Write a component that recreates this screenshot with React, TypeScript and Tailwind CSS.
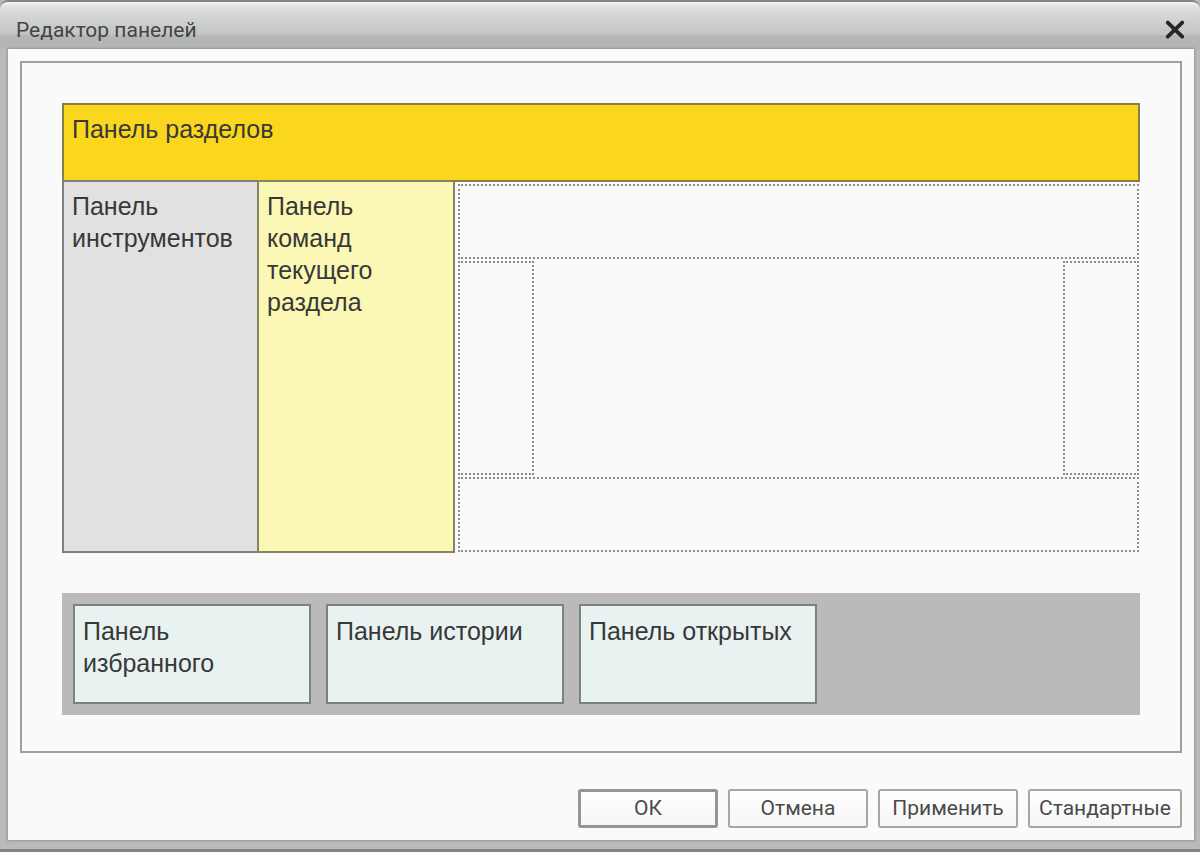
import React from "react";

const storedPanels = ["Панель избранного", "Панель истории", "Панель открытых"];

const slot = "border-2 border-dotted border-[#8c8c8c]";

type ActionButtonProps = {
  label: string;
  primary?: boolean;
  wide?: boolean;
};

function ActionButton({ label, primary = false, wide = false }: ActionButtonProps) {
  const frame = primary ? "border-[3px] border-[#959595]" : "border-2 border-[#a6a6a6]";
  const width = wide ? "w-[154px]" : "w-[140px]";
  return (
    <button
      type="button"
      className={`flex h-[39px] items-center justify-center rounded-[3px] bg-gradient-to-b from-white to-[#f6f6f6] text-[#4a4a4a] ${frame} ${width}`}
    >
      {label}
    </button>
  );
}

export default function App() {
  return (
    <div
      role="dialog"
      aria-labelledby="editor-title"
      className="flex min-h-screen flex-col border-b-[3px] border-[#858585] bg-[#b9baba] font-['Liberation_Sans',sans-serif]"
    >
      <header className="flex h-[49px] items-center justify-between rounded-t-lg border-t-2 border-[#858585] bg-[linear-gradient(to_bottom,#f4f4f4_0px,#e0e0e0_5px,#d2d3d3_16px,#c3c4c5_32px,#b4b5b5_34px,#b4b5b5_100%)] pt-2 pr-[15px] pl-4">
        <h1 id="editor-title" className="font-['Roboto','Liberation_Sans',sans-serif] text-[21px] leading-7 text-[#444]">
          Редактор панелей
        </h1>
        <button type="button" aria-label="Закрыть" className="flex size-5 items-center justify-center text-[#262626]">
          <svg viewBox="0 0 20 20" className="size-5" fill="none" stroke="currentColor" strokeWidth="3.8" strokeLinecap="round">
            <path d="M2.8 2.6 17.2 16.6M17.2 2.6 2.8 16.6" />
          </svg>
        </button>
      </header>

      <main className="mr-[6px] mb-[9px] ml-2 flex flex-1 flex-col bg-[#fafafa] p-3 shadow-[0_0_2px_1px_#969696]">
        <section className="flex flex-1 flex-col border-2 border-[#a0a0a0] px-10 pt-10 pb-9 text-[25px] leading-8 text-[#383838]">
          <div className="h-[79px] border-2 border-[#85804a] bg-[#fad71c] px-2 py-2">Панель разделов</div>
          <div className="-mt-[2px] flex min-h-[373px] flex-1">
            <div className="w-[197px] border-2 border-[#808080] bg-[#e1e1e1] px-2 py-2">Панель инструментов</div>
            <div className="-ml-[2px] w-[198px] border-2 border-[#858565] bg-[#faf8b4] py-2 pr-10 pl-2">
              Панель команд текущего раздела
            </div>
            <div className="mt-1 mr-px mb-px ml-[3px] flex flex-1 flex-col gap-[2px]">
              <div className={`h-[75px] ${slot}`} />
              <div className="flex flex-1 justify-between">
                <div className={`w-[76px] ${slot}`} />
                <div className={`w-[76px] ${slot}`} />
              </div>
              <div className={`h-[75px] ${slot}`} />
            </div>
          </div>
          <div className="mt-10 flex gap-[15px] bg-[#bababa] p-[11px]">
            {storedPanels.map((name) => (
              <div key={name} className="h-[100px] w-[238px] border-2 border-[#7c8282] bg-[#e7f2f1] px-2 py-[9px]">
                {name}
              </div>
            ))}
          </div>
        </section>

        <footer className="mt-9 flex justify-end gap-[10px] font-['Roboto','Liberation_Sans',sans-serif] text-[21px]">
          <ActionButton label="ОК" primary />
          <ActionButton label="Отмена" />
          <ActionButton label="Применить" />
          <ActionButton label="Стандартные" wide />
        </footer>
      </main>
    </div>
  );
}
